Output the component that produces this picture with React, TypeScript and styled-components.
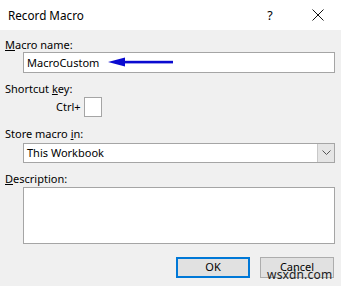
import React from "react";
import styled, { createGlobalStyle } from "styled-components";

const Global = createGlobalStyle`
  html, body { margin: 0; padding: 0; background: #f0f0f0; }
  body { font-family: "Noto Sans", "Open Sans", sans-serif; font-size: 11px; color: #000; }
`;

const Dialog = styled.div`
  width: 341px;
  height: 286px;
  display: flex;
  flex-direction: column;
  background: #f0f0f0;
  overflow: hidden;
  position: relative;
`;

const TitleBar = styled.div`
  height: 30px;
  background: #fff;
  display: flex;
  align-items: center;
  padding-left: 8px;
  flex-shrink: 0;
`;

const Title = styled.div`
  flex: 1;
  font-size: 11.7px;
  line-height: 16px;
  margin-top: -1px;
`;

const TitleButton = styled.div<{ w: number }>`
  width: ${(p) => p.w}px;
  height: 30px;
  display: flex;
  align-items: center;
  justify-content: center;
  font-size: 12.5px;
`;

const Body = styled.div`
  display: flex;
  flex-direction: column;
  padding: 7px 6px 0 5px;
`;

const Label = styled.div<{ mt: number }>`
  margin-top: ${(p) => p.mt}px;
  line-height: 16px;
  height: 16px;
`;

const Field = styled.div<{ h: number; mt: number }>`
  position: relative;
  margin-top: ${(p) => p.mt}px;
  margin-left: 18px;
  height: ${(p) => p.h}px;
  box-sizing: border-box;
  background: #fff;
  border: 1px solid #a5a5a5;
  display: flex;
  align-items: center;
  padding-left: 3px;
  line-height: 16px;
`;

const ArrowSvg = styled.svg`
  position: absolute;
  left: 84px;
  top: 4px;
`;

const KeyRow = styled.div`
  display: flex;
  align-items: center;
  height: 20px;
  margin-top: 0;
  margin-left: 51px;
  gap: 3px;
  line-height: 16px;
`;

const KeyBox = styled.div`
  width: 18px;
  height: 20px;
  box-sizing: border-box;
  background: #fff;
  border: 1px solid #a5a5a5;
`;

const SelectText = styled.div`
  flex: 1;
`;

const DropButton = styled.div`
  width: 17px;
  height: 100%;
  box-sizing: border-box;
  background: #e5e5e5;
  border-left: 1px solid #c8c8c8;
  display: flex;
  align-items: center;
  justify-content: center;
`;

const ButtonRow = styled.div`
  display: flex;
  justify-content: flex-end;
  gap: 10px;
  margin-top: 13px;
  padding-right: 1px;
`;

const Button = styled.div<{ primary?: boolean }>`
  width: 74px;
  height: 21px;
  box-sizing: border-box;
  background: #e1e1e1;
  border: ${(p) => (p.primary ? "2px solid #0078d7" : "1px solid #adadad")};
  display: flex;
  align-items: center;
  justify-content: center;
  line-height: 16px;
  padding-bottom: 1px;
`;

const Watermark = styled.div`
  position: absolute;
  left: 267px;
  top: 268px;
  font-size: 12px;
  line-height: 14px;
  color: #222;
  letter-spacing: 0.2px;
`;

export default function App() {
  return (
    <>
      <Global />
      <Dialog>
        <TitleBar>
          <Title>Record Macro</Title>
          <TitleButton w={50}>?</TitleButton>
          <TitleButton w={46}>
            <svg width="12" height="12" viewBox="0 0 12 12">
              <path d="M0.5 0.5 L11.5 11.5 M11.5 0.5 L0.5 11.5" stroke="#111" strokeWidth="1" fill="none" />
            </svg>
          </TitleButton>
        </TitleBar>
        <Body>
          <Label mt={0}>
            <u>M</u>acro name:
          </Label>
          <Field h={21} mt={-1}>
            MacroCustom
            <ArrowSvg width="70" height="12" viewBox="0 0 70 12">
              <path d="M0 5 L17 0.5 L17 9.5 Z" fill="#0a0ad0" />
              <rect x="14" y="3.8" width="51" height="2.6" fill="#0a0ad0" />
            </ArrowSvg>
          </Field>
          <Label mt={8}>
            Shortcut <u>k</u>ey:
          </Label>
          <KeyRow>
            Ctrl+
            <KeyBox />
          </KeyRow>
          <Label mt={9}>
            Store macro <u>i</u>n:
          </Label>
          <Field h={20} mt={1}>
            <SelectText>This Workbook</SelectText>
            <DropButton>
              <svg width="9" height="6" viewBox="0 0 9 6">
                <path d="M0.5 0.5 L4.5 4.5 L8.5 0.5" stroke="#555" strokeWidth="1" fill="none" />
              </svg>
            </DropButton>
          </Field>
          <Label mt={8}>
            <u>D</u>escription:
          </Label>
          <Field h={57} mt={0} />
          <ButtonRow>
            <Button primary>OK</Button>
            <Button>Cancel</Button>
          </ButtonRow>
        </Body>
        <Watermark>wsxdn.com</Watermark>
      </Dialog>
    </>
  );
}
